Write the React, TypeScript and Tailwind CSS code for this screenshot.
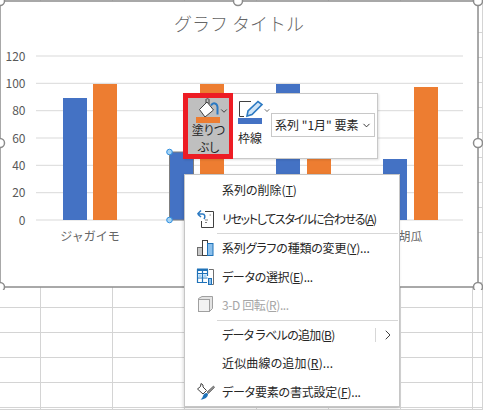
import { ChevronDown, ChevronRight } from 'lucide-react'

const jp = '[font-family:"Noto_Sans_CJK_JP","Noto_Sans",sans-serif]'

const gridYs = [220, 192.7, 165.3, 138, 110.7, 83.3, 56]
const bars = [
  { x: 63, top: 98, fill: '#4472c4' },
  { x: 93, top: 84, fill: '#ed7d31' },
  { x: 200, top: 84, fill: '#ed7d31' },
  { x: 276, top: 84, fill: '#4472c4' },
  { x: 307, top: 130, fill: '#ed7d31' },
  { x: 383, top: 159, fill: '#4472c4' },
  { x: 414, top: 87, fill: '#ed7d31' },
]
const handles = [
  [0, 1], [238, 1], [478, 1], [0, 143], [478, 143], [0, 287], [238, 287], [478, 287],
]

function Sheet() {
  const cells = Array.from({ length: 17 * 8 })
  return (
    <div className="grid grid-cols-[41px_repeat(6,72px)_10px] grid-rows-[33px_repeat(15,25px)_2px] w-[483px] h-[410px]">
      {cells.map((_, i) => (
        <div key={i} className="border-r border-b border-[#d4d4d4]" />
      ))}
    </div>
  )
}

function Chart() {
  return (
    <svg width="483" height="290" className="block">
      <rect x="0" y="1" width="478" height="286" fill="#ffffff" stroke="#8c8c8c" strokeWidth="1.5" />
      <text x="239" y="31" textAnchor="middle" fontSize="18" fontWeight="300" fill="#666666" fontFamily="Noto Sans CJK JP">グラフ タイトル</text>
      {gridYs.map((y, i) => (
        <g key={y}>
          <line x1="36" x2="463" y1={y} y2={y} stroke="#d9d9d9" strokeWidth="1" />
          <text x="25.5" y={y + 4.5} textAnchor="end" fontSize="12" fill="#595959" fontFamily="Noto Sans CJK JP">{i * 20}</text>
        </g>
      ))}
      {bars.map((b) => (
        <rect key={b.x} x={b.x} y={b.top} width="24" height={220 - b.top} fill={b.fill} />
      ))}
      <rect x="169.5" y="152" width="24" height="68" fill="#4472c4" stroke="#7f7f7f" strokeWidth="1" />
      <circle cx="169.5" cy="152" r="2.8" fill="#a6d4f5" stroke="#2f8fe0" strokeWidth="1" />
      <circle cx="169.5" cy="220" r="2.8" fill="#a6d4f5" stroke="#2f8fe0" strokeWidth="1" />
      <text x="90" y="241" textAnchor="middle" fontSize="12" fill="#666666" fontFamily="Noto Sans CJK JP">ジャガイモ</text>
      <text x="410.5" y="241" textAnchor="middle" fontSize="12" fill="#666666" fontFamily="Noto Sans CJK JP">胡瓜</text>
      {handles.map(([x, y]) => (
        <circle key={`${x}-${y}`} cx={x} cy={y} r="4.5" fill="#ffffff" stroke="#8c8c8c" strokeWidth="1.5" />
      ))}
    </svg>
  )
}

function BucketIcon() {
  return (
    <svg width="24" height="20" viewBox="0 0 24 20" className="shrink-0">
      <path d="M8 5 L8 1.5 C8 0.5 11 0.5 11 1.5 L11 6" fill="none" stroke="#404040" strokeWidth="1" />
      <path d="M9 4 L15.5 12 L7 19 L1.5 11.5 Z" fill="#ffffff" stroke="#404040" strokeWidth="1" />
      <path d="M13 7.5 C15 4 19 5 19.5 9 V16.5" fill="none" stroke="#2b79c2" strokeWidth="2" />
    </svg>
  )
}

function PenIcon() {
  return (
    <svg width="26" height="18" viewBox="0 0 26 18" className="shrink-0">
      <path d="M13 1.5 H1.5 V16.5 H6" fill="none" stroke="#404040" strokeWidth="1" />
      <path d="M9 16 L10 11 L20 1.5 L24 4.5 L14 14.5 Z" fill="#cfe4f7" stroke="#2b79c2" strokeWidth="1.6" />
    </svg>
  )
}

function ResetIcon() {
  return (
    <svg width="20" height="20" viewBox="0 0 20 20">
      <path d="M9 2.5 H17.5 V18.5 H5.5 V12" fill="#ffffff" stroke="#404040" strokeWidth="1" />
      <path d="M9 11 H12 M9 13.5 H11 M13.5 6 H15" stroke="#808080" strokeWidth="1" />
      <path d="M1.5 5 L5 1.5 M1.5 5 L5 8 M1.5 5 H6.5 C9 5 9.5 8 8 10" fill="none" stroke="#2b79c2" strokeWidth="1.5" />
    </svg>
  )
}

function ChartTypeIcon() {
  return (
    <svg width="20" height="20" viewBox="0 0 20 20">
      <rect x="1.5" y="9.5" width="5" height="8" fill="#c8c8c8" stroke="#6e6e6e" />
      <rect x="6.5" y="2.5" width="5" height="15" fill="#ffffff" stroke="#404040" />
      <rect x="11.5" y="5.5" width="5.5" height="12" fill="#8cc0ec" stroke="#1f72b8" />
    </svg>
  )
}

function DataIcon() {
  return (
    <svg width="20" height="20" viewBox="0 0 20 20">
      <path d="M1 1.5 H12 V4 H1 Z" fill="#1f72b8" />
      <path d="M1.5 2 V15.5 H11 M6.5 2 V15.5 M11.5 2 V9 M1.5 6.5 H11.5 M1.5 11 H11.5" fill="none" stroke="#1f72b8" strokeWidth="1.2" />
      <rect x="2.5" y="7.5" width="3" height="3" fill="#a6d4f5" />
      <rect x="7.5" y="7.5" width="3" height="3" fill="#a6d4f5" />
      <rect x="12.5" y="11.5" width="3" height="6" fill="#8cc0ec" stroke="#1f72b8" />
      <path d="M13 2.5 H17.5 V17.5 H16" fill="none" stroke="#6e6e6e" />
    </svg>
  )
}

function CubeIcon() {
  return (
    <svg width="20" height="20" viewBox="0 0 20 20">
      <path d="M2.5 3.5 L6 1.5 H16.5 V13.5 L13.5 16.5 H2.5 Z" fill="#e3e3e3" stroke="#a0a0a0" />
      <rect x="2.5" y="4.5" width="11" height="12" fill="#f2f2f2" stroke="#a0a0a0" />
    </svg>
  )
}

function FormatIcon() {
  return (
    <svg width="20" height="20" viewBox="0 0 20 20">
      <path d="M5 1.5 L7 3 L7 5 L10.5 8.5 L7 12 L1.5 7 L4.5 4.5 Z" fill="#ffffff" stroke="#404040" />
      <path d="M11 10 L17.5 4 L18.5 5.5 L12.5 11.5 Z" fill="#8c8c8c" stroke="#595959" strokeWidth="0.7" />
      <path d="M7 14 C8.5 10.5 11 10.5 12 12 C12 15 9 17.5 4.5 17.5 C6 16.5 6.5 15.5 7 14 Z" fill="#1f72b8" />
    </svg>
  )
}

function MenuRow({ icon, label, keyName, tail, disabled, more, tracking }: any) {
  return (
    <div className={`flex items-center h-[28.5px] text-[12px] [font-feature-settings:"palt"] ${disabled ? 'text-[#a6a6a6]' : 'text-[#262626]'}`}>
      <div className="w-[37px] pl-[11px] flex items-center shrink-0">{icon}</div>
      <span className={`whitespace-nowrap ${tracking || ''}`}>
        {label}(<u>{keyName}</u>){tail}
      </span>
      {more && (
        <div className="ml-auto flex items-center h-[14px] border-l border-[#d7d7d7] pl-[4px] pr-[3px]">
          <ChevronRight className="w-[16px] h-[16px] text-[#404040]" strokeWidth={1.5} />
        </div>
      )}
    </div>
  )
}

function Separator() {
  return <div className="ml-[32px] mr-px h-px bg-[#d7d7d7]" />
}

export default function App() {
  return (
    <div className={`relative w-[483px] h-[410px] overflow-hidden bg-white ${jp}`}>
      <Sheet />

      <div className="absolute left-0 top-0">
        <Chart />
      </div>

      {/* mini toolbar */}
      <div className="absolute left-[183px] top-[93px] w-[195px] h-[66px] flex bg-white border border-[#c8c8c8] shadow-[1px_1px_2px_rgba(0,0,0,0.12)]">
        <div className="-ml-px -mt-px w-[50px] h-[66px] shrink-0 border-[5px] border-r-4 border-[#ed1c24] bg-[#bfbfbf] flex flex-col">
          <div className="flex items-center h-[19px] shrink-0 ml-[10px]">
            <BucketIcon />
            <ChevronDown className="w-[11px] h-[11px] -ml-[3px] translate-y-[3.5px] text-[#262626]" strokeWidth={2} />
          </div>
          <div className="w-[24px] h-[6px] shrink-0 ml-[8px] bg-[#ed7d31]" />
          <div className="shrink-0 -mt-[2px] text-[12px] leading-[17px] text-[#262626] text-center whitespace-nowrap [font-feature-settings:'palt']">
            塗りつ
            <br />
            ぶし
          </div>
        </div>
        <div className="w-[38px] shrink-0 flex flex-col pl-[5px] pt-[6px]">
          <div className="flex items-center h-[18px] shrink-0">
            <PenIcon />
            <ChevronDown className="w-[11px] h-[11px] -ml-[1px] mt-[2px] text-[#262626]" strokeWidth={2} />
          </div>
          <div className="w-[24px] h-[6px] shrink-0 bg-[#4472c4]" />
          <div className="mt-[5px] text-[12px] leading-[17px] text-[#262626]">枠線</div>
        </div>
        <div className="flex items-center h-[24px] mt-[19px] w-[104px] border border-[#c8c8c8] pl-[3px] text-[12px] text-[#262626] whitespace-nowrap">
          <span>系列 "1月" 要素</span>
          <ChevronDown className="ml-auto mr-[2px] w-[11px] h-[11px] text-[#262626]" strokeWidth={2} />
        </div>
      </div>

      {/* context menu */}
      <div className="absolute left-[184px] top-[174px] w-[216px] h-[233px] bg-white border border-[#c6c6c6] pt-px shadow-[-1px_1px_3px_rgba(0,0,0,0.15)]">
        <MenuRow label="系列の削除" keyName="T" />
        <MenuRow icon={<ResetIcon />} label="リセットしてスタイルに合わせる" keyName="A" tracking="tracking-[-1.3px]" />
        <Separator />
        <MenuRow icon={<ChartTypeIcon />} label="系列グラフの種類の変更" keyName="Y" tail="..." tracking="tracking-[-0.2px]" />
        <MenuRow icon={<DataIcon />} label="データの選択" keyName="E" tail="..." tracking="tracking-[-0.3px]" />
        <MenuRow icon={<CubeIcon />} label="3-D 回転" keyName="R" tail="..." disabled tracking="tracking-[-0.4px]" />
        <Separator />
        <MenuRow label="データ ラベルの追加" keyName="B" more tracking="tracking-[-0.7px]" />
        <MenuRow label="近似曲線の追加" keyName="R" tail="..." tracking="tracking-[0.15px]" />
        <MenuRow icon={<FormatIcon />} label="データ要素の書式設定" keyName="F" tail="..." tracking="tracking-[-0.2px]" />
      </div>
    </div>
  )
}
